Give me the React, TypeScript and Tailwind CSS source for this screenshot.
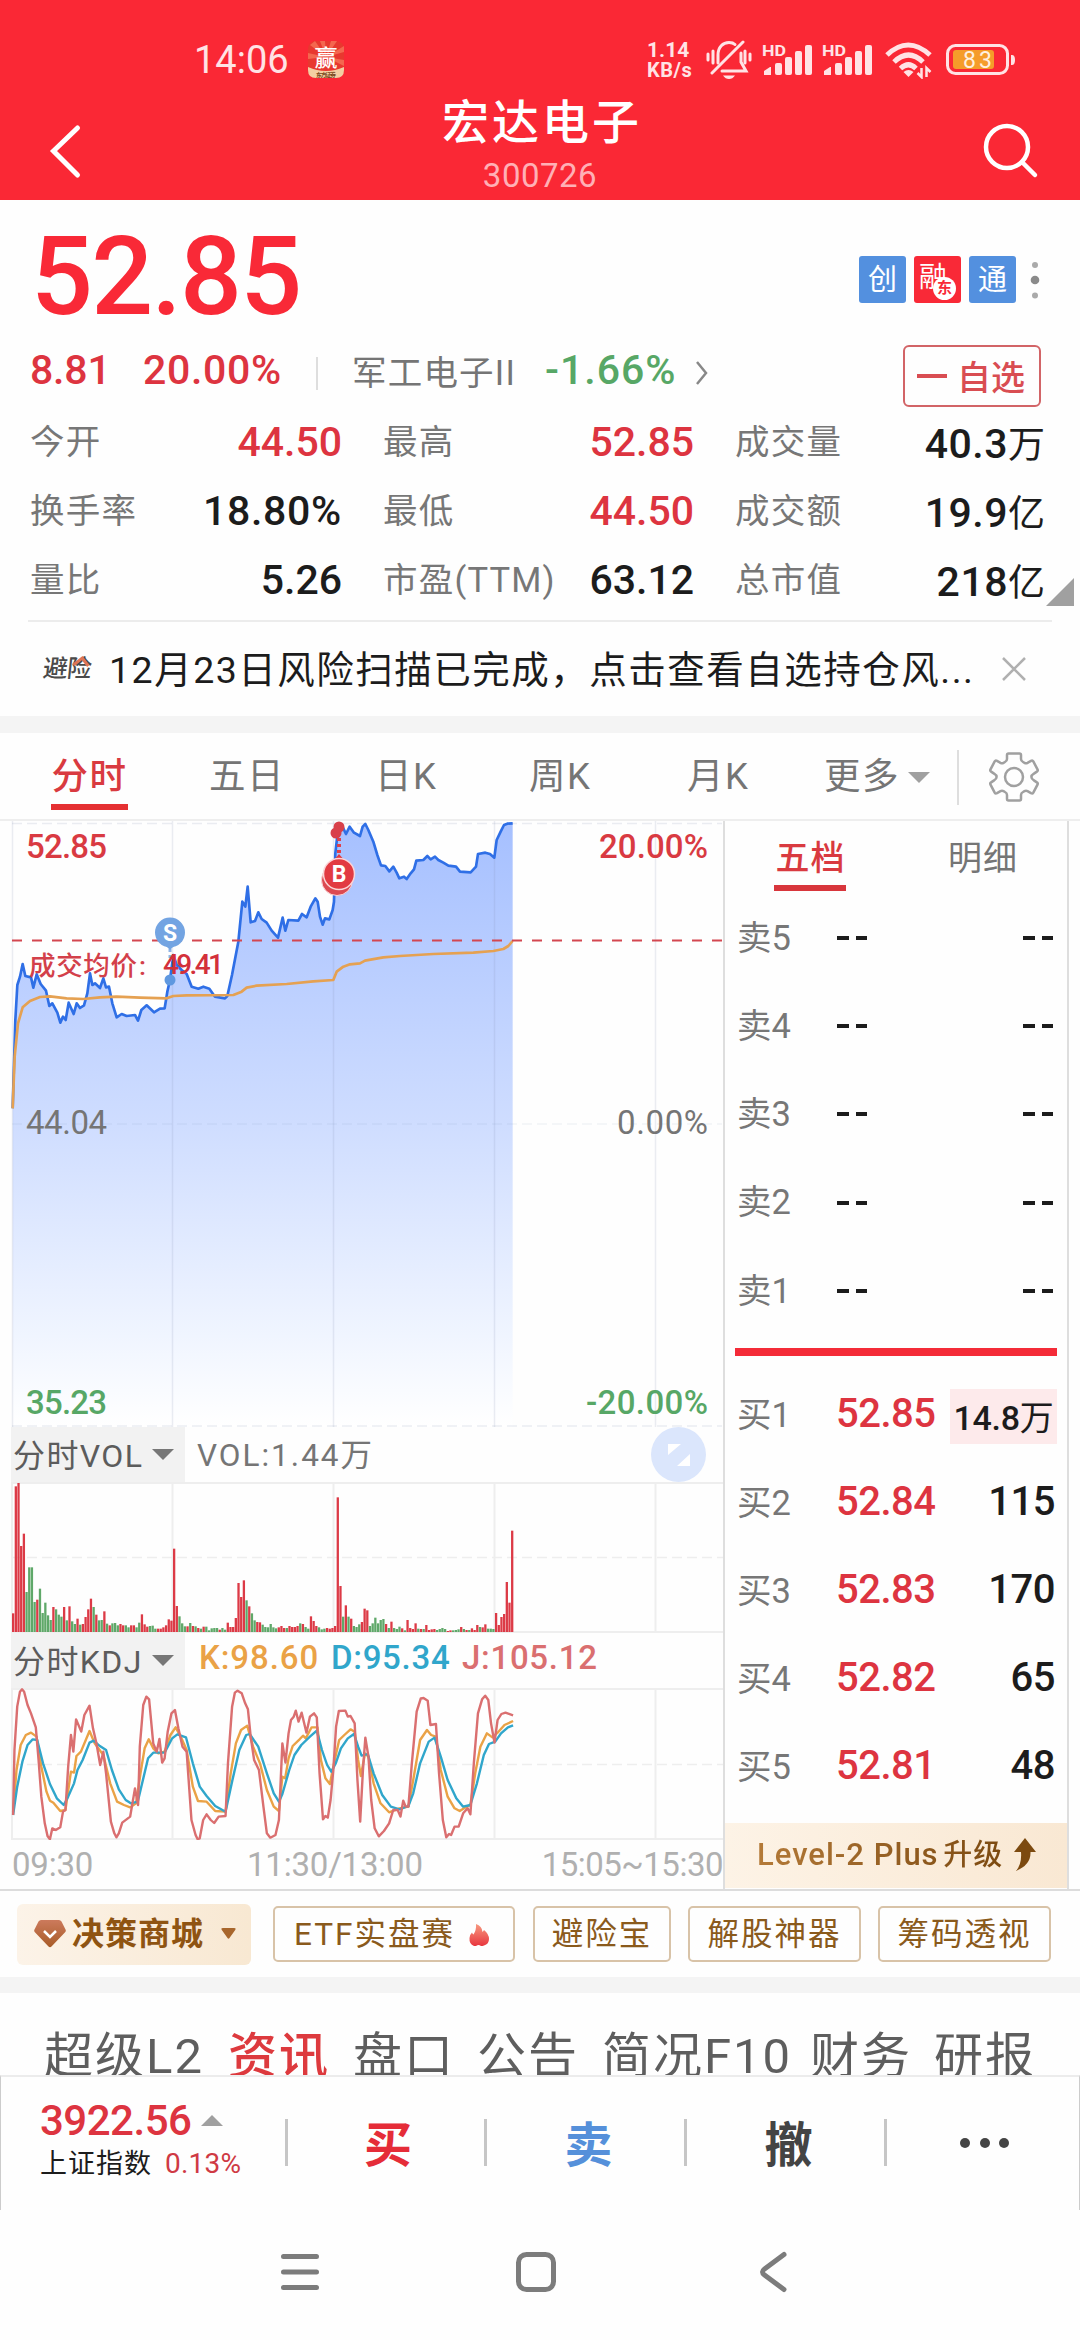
import React, { useState } from "react";

const priceLine =
  "38,1165 46,900 52,795 60,770 68,732 76,768 93,772 100,803 110,763 122,792 138,812 148,858 157,850 172,878 181,908 189,890 197,900 206,848 221,882 230,850 240,864 252,856 262,820 270,760 277,795 285,790 300,804 310,775 318,802 327,800 337,850 350,892 365,882 380,888 405,885 414,902 424,870 440,856 462,877 480,866 494,865 502,815 510,780 520,705 530,735 545,750 560,762 575,800 595,806 610,800 628,806 645,830 675,835 682,828 696,765 715,665 727,545 736,560 743,500 752,607 765,603 775,577 785,597 800,608 815,632 834,653 848,593 856,632 865,600 895,602 906,582 920,592 932,560 946,535 953,545 960,590 968,614 975,595 988,598 998,570 1002,545 1006,400 1016,312 1030,325 1038,342 1049,320 1062,338 1080,348 1088,320 1096,312 1105,330 1120,365 1132,405 1143,436 1156,438 1168,454 1180,440 1190,458 1198,475 1212,470 1220,477 1232,460 1242,448 1249,422 1270,420 1282,408 1292,418 1305,410 1315,420 1330,428 1345,437 1368,440 1380,455 1412,457 1428,440 1434,402 1456,398 1470,402 1483,413 1490,360 1502,335 1512,315 1522,311 1538,310";

const avgLine =
  "38,1165 44,1010 54,910 68,862 90,843 120,831 150,829 200,835 250,837 300,832 350,830 420,833 500,835 520,828 560,826 700,825 725,815 740,803 770,797 860,792 940,784 1000,780 1010,755 1030,740 1050,733 1080,730 1095,722 1150,712 1200,708 1300,702 1420,698 1480,693 1510,687 1525,678 1538,663";

const jLine =
  "38,525 42,330 50,200 58,155 64,148 70,155 80,195 90,220 104,262 112,360 120,470 130,550 138,588 145,598 152,565 162,570 175,562 183,515 190,510 198,380 206,285 213,335 221,238 236,275 245,225 260,197 270,265 280,310 291,375 300,335 308,400 322,545 332,580 338,592 345,580 355,548 378,530 392,445 401,495 406,320 416,195 425,170 433,178 445,310 455,335 463,297 471,368 478,355 487,275 498,220 508,210 518,265 530,320 542,335 556,540 568,585 574,598 580,595 590,540 600,523 612,540 622,549 635,530 655,528 662,370 674,200 682,158 690,152 702,160 712,190 720,208 728,290 738,360 752,390 765,500 775,580 785,593 800,585 810,540 820,310 829,368 838,280 845,240 853,230 859,212 867,245 876,218 890,278 900,230 912,220 920,232 928,400 938,538 945,528 952,533 960,480 968,390 976,260 984,213 1003,212 1010,230 1018,228 1030,250 1038,420 1046,545 1054,390 1061,293 1070,350 1078,480 1088,565 1100,589 1115,573 1130,550 1142,510 1155,510 1163,530 1171,482 1178,500 1186,500 1196,370 1210,215 1222,175 1230,174 1242,182 1250,255 1266,252 1275,400 1286,540 1296,592 1304,582 1310,585 1320,560 1332,560 1345,520 1358,505 1366,523 1376,370 1388,220 1400,178 1409,167 1418,180 1426,250 1436,308 1445,240 1456,222 1468,218 1490,226";

const kLine =
  "38,515 48,390 60,315 75,285 90,278 106,290 120,380 135,455 145,482 155,488 175,513 190,510 206,395 215,398 222,348 235,335 260,273 275,310 300,345 320,430 340,485 360,495 378,502 395,490 408,400 420,325 432,298 445,325 460,340 478,335 495,285 510,262 525,290 542,330 560,440 575,483 600,485 625,513 655,515 670,400 685,310 700,270 718,257 735,320 755,370 775,450 795,500 810,513 820,410 828,415 838,355 850,318 870,298 880,287 888,295 905,262 922,262 932,360 945,415 958,432 970,370 985,300 1000,285 1018,268 1030,275 1040,360 1048,408 1060,340 1070,350 1085,430 1105,490 1130,517 1160,505 1186,500 1200,420 1220,300 1240,270 1252,285 1266,290 1280,390 1300,470 1320,505 1335,513 1350,503 1366,495 1380,400 1395,320 1414,280 1430,292 1445,278 1465,255 1490,243";

const dLine =
  "38,525 50,440 65,365 80,315 95,298 108,300 125,370 145,432 165,475 185,495 198,470 215,430 225,390 240,360 260,308 272,302 290,318 308,330 325,390 345,448 365,480 380,490 400,485 415,420 430,355 445,338 478,338 500,295 515,283 540,292 560,370 580,440 600,468 625,498 655,515 675,420 695,330 715,285 725,282 750,320 775,400 795,460 810,485 820,462 840,390 855,345 875,315 900,290 920,272 935,330 950,375 962,395 975,370 990,325 1010,295 1028,282 1040,320 1050,347 1068,342 1085,400 1110,465 1135,500 1160,508 1186,498 1200,460 1220,370 1245,305 1262,293 1280,350 1300,420 1325,475 1345,500 1366,495 1385,430 1405,345 1420,312 1438,305 1455,280 1475,262 1490,256";

// one entry per minute: height + r (up) / g (down)
const volume =
  "56r 437r 447r 258r 295r 120g 194g 194g 90g 97r 130g 57g 88g 50g 36g 75r 68g 52g 46g 75r 35g 77r 32g 24g 40r 22g 24r 45r 68r 100r 75g 52r 35g 36g 62r 25g 20r 26g 27g 20g 24r 20r 20g 14g 20r 20r 14g 28g 53r 23r 16r 18g 19g 10g 10r 10r 14r 20r 38r 34r 250r 78r 47g 26g 17g 17r 27g 18r 17g 12r 10g 16r 16g 5g 11g 12g 12g 7r 12g 7g 28r 15r 15r 42r 147r 105r 155r 95g 77r 56g 35g 30r 29r 22g 15g 14g 24g 14g 11g 14r 18r 12r 12g 18r 15r 15r 18r 26g 24r 15g 10g 47r 33r 18r 14g 8g 10g 12r 10r 12r 18r 404r 138r 46g 80r 46g 40r 18g 15g 23g 30r 70r 65r 18g 26g 43g 26g 36g 39g 24r 12g 31r 12g 9g 16g 11r 5g 36r 12r 9r 26r 10g 9r 9g 21r 6r 8r 9r 6g 9g 12g 9g 3r 5r 5g 6g 8g 15r 9g 6r 6g 11r 6r 21r 15g 14r 23r 10g 10g 9g 57r 21r 45r 54r 150r 88r 304r".split(
    " "
  );

const stats = [
  [
    { label: "今开", value: "44.50", color: "text-[#dd3440]" },
    { label: "换手率", value: "18.80%", color: "text-[#1c1c1c]" },
    { label: "量比", value: "5.26", color: "text-[#1c1c1c]" },
  ],
  [
    { label: "最高", value: "52.85", color: "text-[#dd3440]" },
    { label: "最低", value: "44.50", color: "text-[#dd3440]" },
    { label: "市盈(TTM)", value: "63.12", color: "text-[#1c1c1c]" },
  ],
  [
    { label: "成交量", value: "40.3", unit: "万", color: "text-[#1c1c1c]" },
    { label: "成交额", value: "19.9", unit: "亿", color: "text-[#1c1c1c]" },
    { label: "总市值", value: "218", unit: "亿", color: "text-[#1c1c1c]" },
  ],
];

const sells = ["卖5", "卖4", "卖3", "卖2", "卖1"];

const buys = [
  { label: "买1", price: "52.85", amount: "14.8万" },
  { label: "买2", price: "52.84", amount: "115" },
  { label: "买3", price: "52.83", amount: "170" },
  { label: "买4", price: "52.82", amount: "65" },
  { label: "买5", price: "52.81", amount: "48" },
];

const gridX = [172.5, 333.5, 494.5, 655.5];

function Signal({ className }: { className: string }) {
  return (
    <svg className={className} width="52" height="34" viewBox="0 0 52 34" fill="#ffe3e5">
      <text x="0" y="13" fontSize="15" fontWeight="700" textLength="24" lengthAdjust="spacingAndGlyphs">HD</text>
      <path d="M2 32v-4l6-4h1v8z" />
      <rect x="13" y="20" width="7" height="12" rx="2" />
      <rect x="23" y="14" width="7" height="18" rx="2" />
      <rect x="33" y="8" width="7" height="24" rx="2" />
      <rect x="43" y="2" width="7" height="30" rx="2" />
    </svg>
  );
}

function StatusBar() {
  return (
    <div className="flex h-[80px] items-center pt-[39px] text-[#ffe3e5]">
      <span className="ml-[194px] w-[96px] text-[38px] leading-none">14:06</span>
      <svg className="ml-[18px]" width="36" height="37" viewBox="0 0 36 37">
        <rect width="36" height="37" rx="8" fill="#e8382f" />
        <path d="M18 16L2 4l5-4zM18 16L12 0h5zM18 16L23 0h6zM18 16L36 5v6zM18 16L0 12v6zM18 16L36 19v6z" fill="#f4674f" />
        <text x="18" y="25" fontSize="23" fontWeight="500" fill="#fff" textAnchor="middle">赢</text>
        <path d="M0 26q18 8 36 0v3q0 8-8 8H8q-8 0-8-8z" fill="#f3cfa2" />
        <text x="18" y="35.5" fontSize="6" fontWeight="700" fill="#7a4a20" textAnchor="middle" textLength="20">东方证券</text>
      </svg>
      <div className="ml-[303px] flex h-[38px] w-[50px] flex-col justify-between text-[21px] leading-[18px] font-bold whitespace-nowrap">
        <span>1.14</span>
        <span className="text-[20px] tracking-[0.500px]">KB/s</span>
      </div>
      <svg className="ml-[9px]" width="46" height="40" viewBox="0 0 46 40" fill="none" stroke="#ffe3e5" strokeWidth="3" strokeLinecap="round">
        <path d="M2 14v6M7 11v12M39 11v12M44 14v6M6 33L37 2" />
        <path d="M12 23V15C12 7 17 2.500 23 2.500c2.500 0 4.500.5 6 2M35 13v9l5 9H16" />
        <path d="M17 35.500h12q-2.500 3.500-6 3.500t-6-3.500z" fill="#ffe3e5" stroke="none" />
      </svg>
      <Signal className="ml-[10px]" />
      <Signal className="ml-[8px]" />
      <svg className="ml-[11px]" width="48" height="38" viewBox="0 0 48 38" fill="none" stroke="#ffe3e5" strokeWidth="5">
        <path d="M2 14Q23-6 45 14M9 21Q23.500 7 38 21M15.500 27.500Q23.500 20 31 27.500" />
        <path d="M23.500 36l-5-5q5-4 10 0z" fill="#ffe3e5" stroke="none" />
        <path d="M36.500 27v9l-4-4M41.500 36v-9l4 4" strokeWidth="2.500" />
      </svg>
      <svg className="ml-[13px]" width="70" height="32" viewBox="0 0 70 32">
        <rect x="1.500" y="1.500" width="60" height="28" rx="8" fill="none" stroke="#ffe3e5" strokeWidth="3" />
        <rect x="7" y="6" width="41" height="19" rx="3" fill="#f59c2a" />
        <path d="M65 11h1q3 0 3 5t-3 5h-1z" fill="#ffe3e5" />
        <text x="17" y="24" fontSize="23" fill="#fff0e0" textLength="29">83</text>
      </svg>
    </div>
  );
}

function Header() {
  return (
    <div className="h-[200px] bg-[#fa2835] text-white">
      <StatusBar />
      <div className="flex h-[120px] justify-between">
        <svg className="mt-[43px] ml-[48px]" width="60" height="56" viewBox="0 0 60 56" fill="none" stroke="#fff" strokeWidth="5" strokeLinecap="round">
          <path d="M29.500 5L5.500 28l24 24" />
        </svg>
        <div className="flex flex-col items-center pt-[15px] pr-[21px]">
          <div className="h-[56px] pl-[16px] text-[47px] leading-[56px] font-medium tracking-[3px]">宏达电子</div>
          <div className="mt-[5px] h-[40px] pl-[12px] text-[33px] leading-[40px] tracking-[0.500px] text-[#ffb0b6]">300726</div>
        </div>
        <svg className="mt-[43px] mr-[41px]" width="58" height="56" viewBox="0 0 58 56" fill="none" stroke="#fff" strokeWidth="4.500" strokeLinecap="round">
          <circle cx="26" cy="24" r="21" />
          <path d="M41 39l13 13" />
        </svg>
      </div>
    </div>
  );
}

function Quote() {
  return (
    <div className="h-[516px]">
      <div className="flex h-[140px] items-center pt-[15px]">
        <div className="ml-[31px] grow text-[109px] leading-none font-medium tracking-[-1.700px] text-[#f92937]">52.85</div>
        <div className="flex gap-2 pt-[4px] text-[29px] leading-none text-white">
          <div className="flex size-[47px] items-center justify-center rounded-[3px] bg-[#5390df] pt-[2px]">创</div>
          <div className="relative flex size-[47px] items-center rounded-[3px] bg-[#f92937] pb-[3px] pl-[5px] text-[28px]">
            融
            <span className="absolute top-[21px] left-[19px] flex size-[23px] items-center justify-center rounded-full bg-white text-[15px] font-bold text-[#f92937]">
              东
            </span>
          </div>
          <div className="flex size-[47px] items-center justify-center rounded-[3px] bg-[#5390df] pt-[2px]">通</div>
        </div>
        <svg className="mt-[4px] mr-[39px] ml-[13px]" width="12" height="40" viewBox="0 0 12 40" fill="#8a8a8a">
          <circle cx="6" cy="5" r="3" fill="#aaa" />
          <circle cx="6" cy="20" r="4.300" />
          <circle cx="6" cy="35.500" r="3" fill="#aaa" />
        </svg>
      </div>

      <div className="flex h-[66px] text-[41px] leading-[60px] font-medium text-[#dd3440]">
        <span className="ml-[30px] w-[113px] tracking-[-0.200px]">8.81</span>
        <span className="w-[173px] tracking-[0.700px]">20.00%</span>
        <span className="mt-[17px] h-[33px] w-[2px] bg-[#dedede]" />
        <span className="ml-[34px] w-[193px] pt-[3px] text-[34.500px] font-normal tracking-[1.200px] text-[#757575]">军工电子II</span>
        <span className="w-[148px] tracking-[1px] text-[#57a766]">-1.66%</span>
        <svg className="mt-[20px] ml-[2px]" width="16" height="26" viewBox="0 0 16 26" fill="none" stroke="#888" strokeWidth="2.500">
          <path d="M2 2l9 11-9 11" />
        </svg>
        <div className="mt-[5px] ml-[192px] flex h-[62px] w-[138px] items-center rounded-[6px] border-2 border-[#d26467] text-[#d94d52]">
          <span className="ml-[12px] h-[4px] w-[30px] bg-[#d94d52]" />
          <span className="ml-[10px] pt-[4px] text-[34px]">自选</span>
        </div>
      </div>

      <div className="flex">
        {stats.map((col, i) => (
          <div key={i} className={i === 0 ? "ml-[30px] w-[312px]" : i === 1 ? "ml-[41px] w-[311px]" : "ml-[41px] w-[310px]"}>
            {col.map((s: any) => (
              <div key={s.label} className="flex h-[69px] items-center justify-between pt-[3px] leading-none">
                <span className="text-[34.500px] tracking-[1.200px] text-[#777]">{s.label}</span>
                <span
                  className={`text-[41px] font-medium ${s.color} ${s.unit ? "pt-[5px] tracking-[0.500px]" : ""} ${
                    s.value.endsWith("%") ? "tracking-[0.700px]" : ""
                  }`}
                >
                  {s.value}
                  {s.unit && <span className="text-[37px] font-normal tracking-[0px]">{s.unit}</span>}
                </span>
              </div>
            ))}
          </div>
        ))}
        <svg className="mt-[172px] ml-[1px]" width="28" height="28" viewBox="0 0 28 28">
          <path d="M28 0v28H0z" fill="#a0a0a0" />
        </svg>
      </div>

      <div className="mt-[7px] mr-[28px] ml-[28px] h-[2px] bg-[#ececec]" />
      <div className="flex h-[94px] items-center">
        <div className="relative ml-[43px] w-[50px] -skew-x-6 text-[24.500px] leading-[32px] font-medium tracking-[-0.500px] whitespace-nowrap text-[#4a4a4a]">
          避险
          <svg className="absolute top-[2px] left-[28px]" width="20" height="14" viewBox="0 0 20 14">
            <path d="M2 10l8-7 7 8" fill="none" stroke="#df7555" strokeWidth="3" />
          </svg>
        </div>
        <span className="ml-[16px] w-[872px] pt-[3px] text-[37.500px] leading-none tracking-[1.500px] whitespace-nowrap text-[#1c1c1c]">
          12月23日风险扫描已完成，点击查看自选持仓风...
        </span>
        <svg className="ml-[20px]" width="26" height="26" viewBox="0 0 26 26" stroke="#b0b0b0" strokeWidth="2.500">
          <path d="M2 2l22 22M24 2L2 24" />
        </svg>
      </div>
    </div>
  );
}

function Tabs({ active, onSelect }: { active: string; onSelect: (t: string) => void }) {
  const tabs = [
    { name: "分时", className: "ml-[51px] w-[158px]" },
    { name: "五日", className: "w-[166px]" },
    { name: "日K", className: "w-[154px]" },
    { name: "周K", className: "w-[158px]" },
    { name: "月K", className: "w-[137px]" },
    { name: "更多", className: "w-[83px]" },
  ];
  return (
    <div className="flex h-[88px] border-b-2 border-[#eee] text-[36.500px] leading-[88px] tracking-[1.500px]">
      {tabs.map((t) => (
        <button key={t.name} onClick={() => onSelect(t.name)} className={`flex items-start ${t.className}`}>
          <span
            className={
              t.name === active
                ? "block h-[77px] w-[77px] border-b-[6px] border-[#e53032] font-medium text-[#d93a40]"
                : "block h-[77px] text-[#757575]"
            }
          >
            {t.name}
          </span>
        </button>
      ))}
      <svg className="mt-[39px]" width="24" height="12" viewBox="0 0 24 12">
        <path d="M1 0h22L12 11z" fill="#a0a0a0" />
      </svg>
      <span className="mt-[17px] ml-[26px] h-[55px] w-[1.500px] bg-[#dedede]" />
      <svg className="mt-[19px] ml-[30px]" width="50" height="50" viewBox="0 0 50 50" fill="none" stroke="#a0a0a0" strokeWidth="2.500" strokeLinejoin="round">
        <path d="M18 3q0-1.500 1.500-1.500h11q1.500 0 1.500 1.500v4q0 2 2 3l1.500.8q1.500.8 3 0l3.500-2q1.500-.8 2.300.6l4.200 8q.7 1.400-.6 2.200l-3 2q-2.500 1.400-2.500 3.400t2.500 3.400l3 2q1.300.8.6 2.200l-4.200 8q-.8 1.400-2.300.6l-3.500-2q-1.500-.8-3 0l-1.500.8q-2 1-2 3v4q0 1.500-1.500 1.500h-11Q18 48.500 18 47v-4q0-2-2-3l-1.500-.8q-1.500-.8-3 0l-3.500 2q-1.500.8-2.300-.6l-4.200-8q-.7-1.400.6-2.200l3-2Q7.600 27 7.600 25t-2.500-3.400l-3-2q-1.300-.8-.6-2.200l4.200-8q.8-1.400 2.300-.6l3.500 2q1.500.8 3 0l1.500-.8q2-1 2-3z" />
        <circle cx="25" cy="25" r="9" />
      </svg>
    </div>
  );
}

function PriceChart() {
  return (
    <svg className="block" width="723" height="606" viewBox="0 0 723 606" fontSize="33" fontWeight="500">
      <defs>
        <linearGradient id="area" x1="0" y1="0" x2="0" y2="1">
          <stop offset="0" stopColor="#a6c0ff" />
          <stop offset="0.500" stopColor="#cfddff" />
          <stop offset="0.850" stopColor="#f0f5ff" />
          <stop offset="1" stopColor="#fff" />
        </linearGradient>
      </defs>
      <g transform="scale(0.33333) translate(0 -303)">
        <polygon points={`38,2120 ${priceLine} 1538,2120`} fill="url(#area)" />
      </g>
      <g stroke="#8090b0" strokeOpacity="0.160" strokeWidth="1.500">
        <path d="M12.500 0v606" />
        {gridX.map((x) => (
          <path key={x} d={`M${x} 0v606`} />
        ))}
        <path d="M12 2.500h710M12 605h710" strokeDasharray="10 5" />
        <path d="M12 303h710" strokeDasharray="10 5" strokeOpacity="0.100" />
      </g>
      <g transform="scale(0.33333) translate(0 -303)" fill="none" strokeLinejoin="round">
        <polyline points={priceLine} stroke="#2f6fe6" strokeWidth="8" />
        <polyline points={avgLine} stroke="#e5a152" strokeWidth="8" />
      </g>
      <path d="M12 119.500h711" stroke="#d34750" strokeWidth="2" strokeDasharray="10 10" />
      <g>
        <path d="M170 116v22" stroke="#8fb4e6" strokeWidth="3" strokeDasharray="3 3" />
        <circle cx="170" cy="159" r="5.500" fill="#5f98e0" />
        <path d="M170 129l-6-6h12z" fill="#73a4e2" />
        <circle cx="170" cy="111.500" r="15" fill="#73a4e2" />
        <text x="170" y="120" fontSize="23" fontWeight="700" fill="#fff" textAnchor="middle">S</text>
      </g>
      <g>
        <path d="M339 5v30" stroke="#e0404a" strokeWidth="4" strokeDasharray="3 3" />
        <circle cx="336" cy="12" r="5.500" fill="#d8404a" />
        <circle cx="339" cy="6" r="5.500" fill="#d8404a" />
        <circle cx="337" cy="59" r="15.500" fill="#dc4a52" stroke="#fbd5d7" strokeWidth="1" />
        <path d="M339 33l-6 7h12z" fill="#e23a42" />
        <circle cx="339" cy="53" r="15.500" fill="#e23a42" stroke="#fbd5d7" strokeWidth="1.500" />
        <text x="339" y="61" fontSize="23" fontWeight="700" fill="#fff" textAnchor="middle">B</text>
      </g>
      <text x="26" y="37" fill="#d93a42" textLength="81">52.85</text>
      <text x="708" y="37" fill="#d93a42" textAnchor="end" textLength="109">20.00%</text>
      <text x="29" y="154" fontSize="26.500" fill="#d3404a" textLength="108">成交均价</text>
      <text x="139" y="154" fontSize="26.500" fill="#d3404a">:</text>
      <text x="163" y="153" fontSize="28" fill="#d3303a" textLength="61">49.41</text>
      <text x="26" y="313" fill="#757575" fontWeight="400" textLength="81">44.04</text>
      <text x="708" y="313" fill="#757575" fontWeight="400" textAnchor="end" textLength="91">0.00%</text>
      <text x="26" y="593" fill="#57a766" textLength="81">35.23</text>
      <text x="708" y="593" fill="#57a766" textAnchor="end" textLength="122">-20.00%</text>
    </svg>
  );
}

function IndicatorName({ name }: { name: string }) {
  return (
    <div className="ml-[11px] flex h-[55px] w-[174px] items-center bg-[#f2f2f2]">
      <span className="ml-[2px] w-[139px] pt-[2px] text-[32px] leading-none tracking-[1.400px] text-[#5c5c5c]">{name}</span>
      <svg width="22" height="12" viewBox="0 0 22 12">
        <path d="M0 0h22L11 11z" fill="#777" />
      </svg>
    </div>
  );
}

function VolumeChart() {
  return (
    <svg className="block" width="723" height="151" viewBox="0 0 723 151">
      <g stroke="#eeeeee" strokeWidth="2">
        <path d="M11 1h712M11 150h712M12 0v151" />
        {gridX.map((x) => (
          <path key={x} d={`M${x} 0v151`} />
        ))}
        <path d="M12 75.500h711" strokeDasharray="10 5" strokeWidth="1.500" />
      </g>
      {volume.map((v, i) => {
        const h = parseInt(v) / 3;
        return (
          <rect
            key={i}
            x={12 + i * 2.683}
            y={150 - h}
            width="2.300"
            height={h}
            fill={v.endsWith("r") ? "#dc3a46" : "#5fa869"}
          />
        );
      })}
    </svg>
  );
}

function KdjChart() {
  return (
    <svg className="block" width="723" height="152" viewBox="0 0 723 152">
      <g stroke="#eeeeee" strokeWidth="2">
        <path d="M11 1h712M11 151h712M12 0v151" />
        {gridX.map((x) => (
          <path key={x} d={`M${x} 0v151`} />
        ))}
        <path d="M12 76.500h711" strokeDasharray="10 5" strokeWidth="1.500" />
      </g>
      <g transform="scale(0.34435 0.33333) translate(0 -144)" fill="none" strokeWidth="7" strokeLinejoin="round">
        <polyline points={kLine} stroke="#eaa246" />
        <polyline points={dLine} stroke="#30a6cb" />
        <polyline points={jLine} stroke="#da6f70" />
      </g>
    </svg>
  );
}

function Charts() {
  return (
    <div className="w-[723px]">
      <PriceChart />
      <div className="flex h-[55px] items-center">
        <IndicatorName name="分时VOL" />
        <span className="ml-[12px] w-[454px] pt-[2px] text-[31.500px] leading-none tracking-[2px] text-[#757575]">VOL:1.44万</span>
        <svg width="55" height="55" viewBox="0 0 55 55">
          <circle cx="27.500" cy="27.500" r="27.500" fill="#dbe6fc" />
          <path d="M17 17h13L17 28zM39 27v12H26z" fill="#fff" />
        </svg>
      </div>
      <VolumeChart />
      <div className="flex h-[55px] items-center text-[33px] leading-none font-medium">
        <div className="font-normal">
          <IndicatorName name="分时KDJ" />
        </div>
        <span className="ml-[14px] w-[132px] pb-[6px] tracking-[0.900px] text-[#eaa246]">K:98.60</span>
        <span className="w-[131px] pb-[6px] tracking-[0.700px] text-[#30a6cb]">D:95.34</span>
        <span className="pb-[6px] tracking-[0.700px] text-[#da6f70]">J:105.12</span>
      </div>
      <KdjChart />
      <div className="flex h-[48px] items-center pl-[12px] text-[33px] leading-none text-[#b0b0b0]">
        <span className="w-[235px] tracking-[-0.200px]">09:30</span>
        <span className="grow tracking-[-0.200px]">11:30/13:00</span>
        <span className="tracking-[-0.500px]">15:05~15:30</span>
      </div>
    </div>
  );
}

function OrderBook() {
  return (
    <div className="w-[346px] border-x-2 border-[#dedede]">
      <div className="flex h-[73px] text-[34px] leading-[75px] tracking-[1px]">
        <div className="ml-[49px] h-[70px] w-[72px] border-b-[6px] border-[#d8363c] pl-[1px] text-center font-medium text-[#d93a40]">五档</div>
        <div className="ml-[102px] text-[#757575]">明细</div>
      </div>
      {sells.map((s) => (
        <div key={s} className="flex h-[88.200px] items-center justify-between pr-[14px] pl-[12px] text-[#1c1c1c]">
          <span className="w-[100px] text-[34.500px] leading-none text-[#777]">{s}</span>
          <span className="flex grow gap-[7px]">
            <i className="h-[4px] w-[11.500px] bg-[#1c1c1c]" />
            <i className="h-[4px] w-[11.500px] bg-[#1c1c1c]" />
          </span>
          <span className="flex gap-[7px]">
            <i className="h-[4px] w-[11.500px] bg-[#1c1c1c]" />
            <i className="h-[4px] w-[11.500px] bg-[#1c1c1c]" />
          </span>
        </div>
      ))}
      <div className="mt-[13px] mr-[10px] ml-[10px] h-[8px] bg-[#f42b38]" />
      <div className="h-[15px]" />
      {buys.map((b, i) => (
        <div key={b.label} className="flex h-[88px] items-center pr-[10px] pl-[12px] font-medium">
          <span className="w-[99px] text-[34.500px] leading-none font-normal text-[#777]">{b.label}</span>
          <span className="grow pb-[2px] text-[40px] leading-none tracking-[-0.500px] text-[#dd3440]">{b.price}</span>
          {i === 0 ? (
            <span className="mt-[3px] -ml-[10px] flex h-[55px] w-[107px] items-center justify-center bg-[#fdeaeb] pt-[3px] text-[34px] leading-none tracking-[-0.300px] text-[#1c1c1c]">
              <span>14.8</span>
              <span className="font-normal">万</span>
            </span>
          ) : (
            <span className="pr-[2px] pb-[2px] text-[40px] leading-none tracking-[-0.500px] text-[#1c1c1c]">{b.amount}</span>
          )}
        </div>
      ))}
      <div className="mt-[12px] flex h-[65px] items-center bg-gradient-to-r from-[#fdf3e6] to-[#f9e8d3]">
        <span className="ml-[32px] bg-gradient-to-r from-[#b47a38] to-[#7c4a10] bg-clip-text text-[31px] leading-[44px] font-medium tracking-[1px] whitespace-nowrap text-transparent">
          Level-2 Plus <span className="-ml-[4px] text-[29px]">升级</span>
        </span>
        <svg className="ml-[10px]" width="24" height="34" viewBox="0 0 24 34">
          <path d="M12 0l11 14h-5.500Q18 27 3 33q6-7 5-19H1z" fill="#7c4a10" />
        </svg>
      </div>
    </div>
  );
}

function Shortcuts() {
  const chip = "flex h-[56px] items-center rounded-[5px] border-2 border-[#d8c3a8] text-[31.500px] leading-none tracking-[2px] text-[#8a5a1c] justify-center pt-[2px]";
  return (
    <div className="flex h-[88px] items-center border-t-2 border-[#dcdcdc]">
      <div className="ml-[17px] flex h-[61px] w-[234px] items-center rounded-[6px] bg-gradient-to-r from-[#fcf3e8] to-[#f8e8d2]">
        <svg className="ml-[17px]" width="32" height="28" viewBox="0 0 32 28">
          <defs>
            <linearGradient id="gem" x1="0" y1="0" x2="0" y2="1">
              <stop offset="0" stopColor="#cc7a5c" />
              <stop offset="1" stopColor="#a85c28" />
            </linearGradient>
          </defs>
          <path d="M7 0h18q1.500 0 2.500 1.500l4 8q.8 1.500-.4 2.800L17.500 26.500q-1.500 1.500-3 0L.9 12.300Q-.3 11 .5 9.500l4-8Q5.500 0 7 0z" fill="url(#gem)" />
          <path d="M10 11l6 6 6-6" fill="none" stroke="#fff" strokeWidth="2.500" />
        </svg>
        <span className="ml-[6px] text-[32px] leading-none font-bold tracking-[1px] text-[#8f5412]">决策商城</span>
        <svg className="ml-[17px]" width="15" height="12" viewBox="0 0 15 12">
          <path d="M2 0h11q2.500 0 1.200 2L8.500 10q-1 1.500-2 0L.8 2Q-.5 0 2 0z" fill="#a8662c" />
        </svg>
      </div>
      <div className={`ml-[22px] w-[242px] ${chip}`}>
        <span className="-ml-[5px]">ETF实盘赛</span>
        <svg className="ml-[14px]" width="20" height="22" viewBox="0 0 20 22">
          <defs>
            <linearGradient id="fire" x1="0" y1="0" x2="0" y2="1">
              <stop offset="0" stopColor="#f79a80" />
              <stop offset="1" stopColor="#e8363e" />
            </linearGradient>
          </defs>
          <path d="M7 0q6 2 6.500 8 1-.8 1.500-2 5 4 5 9 0 5-5 6.500-1.500.5-3 .5-1.500-1-2.500-1-1 0-2.500 1H5Q0 20 .5 14q0-3 2.500-5.500.5 1.500 1.500 2Q7.500 6 7 0z" fill="url(#fire)" />
        </svg>
      </div>
      <div className={`ml-[18px] w-[138px] ${chip}`}>避险宝</div>
      <div className={`ml-[17px] w-[173px] ${chip}`}>解股神器</div>
      <div className={`ml-[17px] w-[173px] ${chip}`}>筹码透视</div>
    </div>
  );
}

function InfoTabs() {
  const tabs = [
    { name: "超级L2", className: "w-[184px] text-[#5e5e5e]" },
    { name: "资讯", className: "w-[125px] font-medium text-[#dd3a3e]" },
    { name: "盘口", className: "w-[124px] text-[#5e5e5e]" },
    { name: "公告", className: "w-[125px] text-[#5e5e5e]" },
    { name: "简况F10", className: "w-[208px] text-[#5e5e5e]" },
    { name: "财务", className: "w-[124px] text-[#5e5e5e]" },
    { name: "研报", className: "text-[#5e5e5e]" },
  ];
  return (
    <div className="flex h-[82px] overflow-hidden pt-[32px] pl-[44px] text-[49px] leading-[64px] tracking-[2px] whitespace-nowrap">
      {tabs.map((t) => (
        <span key={t.name} className={`shrink-0 ${t.className}`}>{t.name}</span>
      ))}
    </div>
  );
}

function TradeBar() {
  return (
    <div className="flex h-[135px] border-x border-t-2 border-x-[#ccc] border-t-[#ececec] text-[48px] leading-none font-bold">
      <div className="w-[244px] pl-[39px]">
        <div className="mt-[23px] flex items-center text-[42px] font-medium tracking-[-0.500px] text-[#dd3440]">
          3922.56
          <svg className="ml-[10px]" width="22" height="12" viewBox="0 0 22 12">
            <path d="M0 11h22L11 0z" fill="#a0a0a0" />
          </svg>
        </div>
        <div className="mt-[8px] flex items-center text-[27px] font-normal tracking-[1px] whitespace-nowrap text-[#1c1c1c]">
          上证指数
          <span className="ml-[13px] text-[28px] tracking-[0.200px] text-[#cf3a44]">0.13%</span>
        </div>
      </div>
      <span className="mt-[42px] ml-[40px] h-[47px] w-[3px] bg-[#c6c6c6]" />
      <span className="mt-[45px] w-[196px] pl-[4px] text-center text-[#e52c38]">买</span>
      <span className="mt-[42px] h-[47px] w-[3px] bg-[#c6c6c6]" />
      <span className="mt-[45px] w-[197px] pl-[6px] text-center text-[#5590da]">卖</span>
      <span className="mt-[42px] h-[47px] w-[3px] bg-[#c6c6c6]" />
      <span className="mt-[45px] w-[197px] pl-[6px] text-center text-[#444]">撤</span>
      <span className="mt-[42px] h-[47px] w-[3px] bg-[#c6c6c6]" />
      <div className="mt-[61px] ml-[73px] flex gap-[9.500px]">
        <i className="size-[10px] rounded-full bg-[#444]" />
        <i className="size-[10px] rounded-full bg-[#444]" />
        <i className="size-[10px] rounded-full bg-[#444]" />
      </div>
    </div>
  );
}

function SystemNav() {
  return (
    <div className="flex h-[130px] pt-[40px]">
      <svg className="ml-[279px]" width="42" height="44" viewBox="0 0 42 44" stroke="#7c7c7c" strokeWidth="5" strokeLinecap="round">
        <path d="M4.500 6.500h33M4.500 22h33M4.500 37.500h33" />
      </svg>
      <svg className="ml-[193px]" width="44" height="44" viewBox="0 0 44 44" fill="none" stroke="#7c7c7c" strokeWidth="5">
        <rect x="4.500" y="4.500" width="35" height="35" rx="8" />
      </svg>
      <svg className="ml-[200px]" width="30" height="44" viewBox="0 0 30 44" fill="none" stroke="#7c7c7c" strokeWidth="5" strokeLinecap="round" strokeLinejoin="round">
        <path d="M26 4.500L6.500 19q-4 3 0 6L26 39.500" />
      </svg>
    </div>
  );
}

export default function App() {
  const [active, setActive] = useState("分时");

  return (
    <div className="h-[2340px] w-[1080px] overflow-hidden bg-[#fefefe] font-['Roboto','Noto_Sans_CJK_SC',sans-serif]">
      <Header />
      <Quote />
      <div className="h-[17px] bg-[#f4f4f4]" />
      <Tabs active={active} onSelect={setActive} />
      <div className="flex h-[1068px]">
        <Charts />
        <OrderBook />
      </div>
      <Shortcuts />
      <div className="h-[16px] bg-[#f4f4f4]" />
      <InfoTabs />
      <TradeBar />
      <SystemNav />
    </div>
  );
}
